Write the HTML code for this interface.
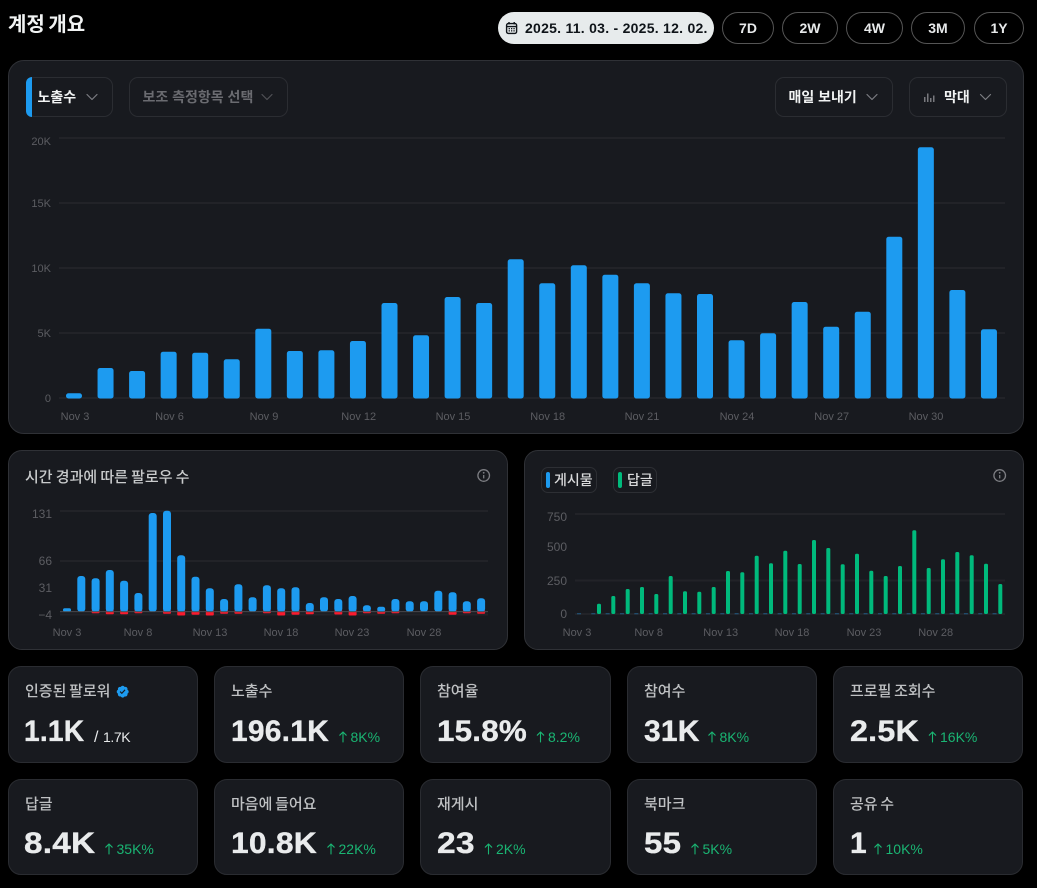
<!DOCTYPE html>
<html lang="ko">
<head>
<meta charset="utf-8">
<title>계정 개요</title>
<style>
*{box-sizing:border-box;margin:0;padding:0}
html,body{width:1037px;height:888px;background:#000;overflow:hidden}
body{position:relative;font-family:"Liberation Sans","Noto Sans CJK KR",sans-serif;color:#e7e9ea}
.a{position:absolute;white-space:nowrap}
.card{position:absolute;background:#181a1f;border:1px solid #2f3136}
.title{left:8px;top:11px;font-size:20px;line-height:28px;font-weight:700;color:#f1f3f3;word-spacing:-2px}
.pill{position:absolute;top:12px;height:32px;border:1px solid #555;border-radius:16px;font-size:14px;font-weight:700;line-height:30px;text-align:center;color:#e7e9ea}
.date{left:498px;width:216px;background:#e7ebec;border:0;color:#0f1419;line-height:32px;text-align:left;padding-left:27px;letter-spacing:.26px}
.dd{position:absolute;top:77px;height:40px;border:1px solid #2b2d32;border-radius:9px;background:#181a1f}
.ddt{top:87px;font-size:14px;line-height:20px;font-weight:700;color:#f1f3f3}
.ct{left:25px;top:467px;font-size:15px;line-height:22px;font-weight:500;color:#c9cbcc;word-spacing:-1px}
.chip{position:absolute;top:467px;height:26px;border:1px solid #2d2f34;border-radius:7px}
.cht{top:470px;font-size:14px;line-height:20px;font-weight:500;color:#d9dadb}
.m{position:absolute;width:190px;background:#181a1f;border:1px solid #2a2c31;border-radius:13px}
.l{font-size:15px;line-height:22px;font-weight:500;color:#bfc1c3;word-spacing:-1.5px}
.v{font-size:30px;line-height:34px;font-weight:700;color:#e9ebec;letter-spacing:.2px;transform-origin:0 50%;-webkit-text-stroke:.35px #e9ebec}
.d{font-size:14px;line-height:16px;color:#1ab573}
svg{position:absolute;left:0;top:0}
svg text{font-family:"Liberation Sans",sans-serif;font-size:11px;fill:#5c5d62}
svg text.y{font-size:12px}
</style>
</head>
<body>
<div class="a title">계정 개요</div>

<div class="pill date">2025. 11. 03. - 2025. 12. 02.</div>
<div class="pill" style="left:722px;width:52px">7D</div>
<div class="pill" style="left:782px;width:56px">2W</div>
<div class="pill" style="left:846px;width:57px">4W</div>
<div class="pill" style="left:911px;width:54px">3M</div>
<div class="pill" style="left:974px;width:50px">1Y</div>

<div class="card" style="left:8px;top:60px;width:1016px;height:374px;border-radius:16px"></div>
<div class="card" style="left:8px;top:450px;width:500px;height:200px;border-radius:14px"></div>
<div class="card" style="left:524px;top:450px;width:500px;height:200px;border-radius:14px"></div>

<div class="dd" style="left:26px;width:87px"></div>
<div style="position:absolute;left:26px;top:77px;width:6px;height:40px;background:#1d9bf0;border-radius:6px 0 0 6px"></div>
<div class="a ddt" style="left:37.5px">노출수</div>
<div class="dd" style="left:129px;width:159px"></div>
<div class="a ddt" style="left:142.5px;color:#6a6b70">보조 측정항목 선택</div>
<div class="dd" style="left:775px;width:118px"></div>
<div class="a ddt" style="left:788.5px">매일 보내기</div>
<div class="dd" style="left:909px;width:98px"></div>
<div class="a ddt" style="left:944px">막대</div>

<div class="a ct">시간 경과에 따른 팔로우 수</div>

<div class="chip" style="left:541px;width:56px"></div>
<div style="position:absolute;left:546px;top:472px;width:4px;height:16px;border-radius:2px;background:#1d9bf0"></div>
<div class="a cht" style="left:554px">게시물</div>
<div class="chip" style="left:613px;width:44px"></div>
<div style="position:absolute;left:618px;top:472px;width:4px;height:16px;border-radius:2px;background:#00ba7c"></div>
<div class="a cht" style="left:627px">답글</div>

<div class="m" style="left:8px;top:666px;height:97px"></div>
<div class="m" style="left:214px;top:666px;height:97px"></div>
<div class="m" style="left:420px;top:666px;height:97px;width:191px"></div>
<div class="m" style="left:627px;top:666px;height:97px"></div>
<div class="m" style="left:833px;top:666px;height:97px"></div>
<div class="m" style="left:8px;top:779px;height:96px"></div>
<div class="m" style="left:214px;top:779px;height:96px"></div>
<div class="m" style="left:420px;top:779px;height:96px;width:191px"></div>
<div class="m" style="left:627px;top:779px;height:96px"></div>
<div class="m" style="left:833px;top:779px;height:96px"></div>

<div class="a l" style="left:25px;top:681px">인증된 팔로워</div>
<div class="a l" style="left:231px;top:681px">노출수</div>
<div class="a l" style="left:437px;top:681px">참여율</div>
<div class="a l" style="left:644px;top:681px">참여수</div>
<div class="a l" style="left:850px;top:681px">프로필 조회수</div>
<div class="a l" style="left:25px;top:794px">답글</div>
<div class="a l" style="left:231px;top:794px">마음에 들어요</div>
<div class="a l" style="left:437px;top:794px">재게시</div>
<div class="a l" style="left:644px;top:794px">북마크</div>
<div class="a l" style="left:850px;top:794px">공유 수</div>

<div class="a v" style="left:24px;top:715px;transform:scaleX(.94)">1.1K</div>
<div class="a v" style="left:231px;top:715px">196.1K</div>
<div class="a v" style="left:437px;top:715px;transform:scaleX(1.045)">15.8%</div>
<div class="a v" style="left:644px;top:715px">31K</div>
<div class="a v" style="left:850px;top:715px;transform:scaleX(1.075)">2.5K</div>
<div class="a v" style="left:24px;top:827px;transform:scaleX(1.11)">8.4K</div>
<div class="a v" style="left:231px;top:827px;transform:scaleX(1.06)">10.8K</div>
<div class="a v" style="left:437px;top:827px;transform:scaleX(1.12)">23</div>
<div class="a v" style="left:644px;top:827px;transform:scaleX(1.1)">55</div>
<div class="a v" style="left:850px;top:827px">1</div>

<div class="a" style="left:94px;top:729px;font-size:16px;line-height:18px;color:#e7e9ea">/</div>
<div class="a" style="left:103px;top:729px;font-size:14px;line-height:16px;letter-spacing:-.4px;color:#e7e9ea">1.7K</div>

<div class="a d" style="left:350.5px;top:729px">8K%</div>
<div class="a d" style="left:548px;top:729px">8.2%</div>
<div class="a d" style="left:719.5px;top:729px">8K%</div>
<div class="a d" style="left:940px;top:729px">16K%</div>
<div class="a d" style="left:116.5px;top:841px">35K%</div>
<div class="a d" style="left:338.5px;top:841px">22K%</div>
<div class="a d" style="left:496px;top:841px">2K%</div>
<div class="a d" style="left:702.5px;top:841px">5K%</div>
<div class="a d" style="left:885.5px;top:841px">10K%</div>

<svg width="1037" height="888" viewBox="0 0 1037 888" xmlns="http://www.w3.org/2000/svg">
<!-- calendar -->
<g fill="none" stroke="#0f1419" stroke-width="1.4"><rect x="506.6" y="23.6" width="10" height="9.8" rx="1.6"/><path d="M506.6 26.6h10M509 22v2.4M514.2 22v2.4"/></g>
<g fill="#0f1419"><rect x="508.6" y="28" width="1.3" height="1.3"/><rect x="511" y="28" width="1.3" height="1.3"/><rect x="513.4" y="28" width="1.3" height="1.3"/><rect x="508.6" y="30.2" width="1.3" height="1.3"/><rect x="511" y="30.2" width="1.3" height="1.3"/><rect x="513.4" y="30.2" width="1.3" height="1.3"/></g>

<!-- chevrons -->
<g fill="none" stroke-width="1.2" stroke-linecap="round" stroke-linejoin="round">
<path d="M87 94.5l5 5 5-5" stroke="#7c7d82"/>
<path d="M262 94.5l5 5 5-5" stroke="#505156"/>
<path d="M867 94.5l5 5 5-5" stroke="#7c7d82"/>
<path d="M980.5 94.5l5 5 5-5" stroke="#7c7d82"/>
</g>
<!-- bar icon -->
<g fill="#77787d"><rect x="924" y="97" width="1.5" height="5"/><rect x="927" y="93.5" width="1.5" height="8.5"/><rect x="930" y="98" width="1.5" height="4"/><rect x="933" y="95.5" width="1.5" height="6.5"/></g>

<!-- main grid -->
<g fill="#222328"><rect x="59" y="137" width="946" height="2"/><rect x="59" y="202" width="946" height="2"/><rect x="59" y="267" width="946" height="2"/><rect x="59" y="332" width="946" height="2"/><rect x="59" y="397" width="946" height="2"/></g>
<g text-anchor="end"><text x="51" y="145">20K</text><text x="51" y="207">15K</text><text x="51" y="272">10K</text><text x="51" y="337">5K</text><text x="51" y="402">0</text></g>
<g text-anchor="middle"><text x="75" y="420">Nov 3</text><text x="169.5" y="420">Nov 6</text><text x="264" y="420">Nov 9</text><text x="358.7" y="420">Nov 12</text><text x="453" y="420">Nov 15</text><text x="547.7" y="420">Nov 18</text><text x="642" y="420">Nov 21</text><text x="737" y="420">Nov 24</text><text x="831.7" y="420">Nov 27</text><text x="926" y="420">Nov 30</text></g>
<g fill="#1d9bf0">
<rect x="66" y="393.3" width="16" height="5.2" rx="2.5"/>
<rect x="97.55" y="368" width="16" height="30.5" rx="2.5"/>
<rect x="129.1" y="371" width="16" height="27.5" rx="2.5"/>
<rect x="160.65" y="351.7" width="16" height="46.8" rx="2.5"/>
<rect x="192.2" y="352.7" width="16" height="45.8" rx="2.5"/>
<rect x="223.75" y="359.3" width="16" height="39.2" rx="2.5"/>
<rect x="255.3" y="328.7" width="16" height="69.8" rx="2.5"/>
<rect x="286.85" y="351" width="16" height="47.5" rx="2.5"/>
<rect x="318.4" y="350.3" width="16" height="48.2" rx="2.5"/>
<rect x="349.95" y="341" width="16" height="57.5" rx="2.5"/>
<rect x="381.5" y="303" width="16" height="95.5" rx="2.5"/>
<rect x="413.05" y="335.3" width="16" height="63.2" rx="2.5"/>
<rect x="444.6" y="297" width="16" height="101.5" rx="2.5"/>
<rect x="476.15" y="303" width="16" height="95.5" rx="2.5"/>
<rect x="507.7" y="259.3" width="16" height="139.2" rx="2.5"/>
<rect x="539.25" y="283.3" width="16" height="115.2" rx="2.5"/>
<rect x="570.8" y="265.3" width="16" height="133.2" rx="2.5"/>
<rect x="602.35" y="274.7" width="16" height="123.8" rx="2.5"/>
<rect x="633.9" y="283.3" width="16" height="115.2" rx="2.5"/>
<rect x="665.45" y="293.3" width="16" height="105.2" rx="2.5"/>
<rect x="697" y="294" width="16" height="104.5" rx="2.5"/>
<rect x="728.55" y="340.3" width="16" height="58.2" rx="2.5"/>
<rect x="760.1" y="333.3" width="16" height="65.2" rx="2.5"/>
<rect x="791.65" y="302" width="16" height="96.5" rx="2.5"/>
<rect x="823.2" y="326.7" width="16" height="71.8" rx="2.5"/>
<rect x="854.75" y="311.7" width="16" height="86.8" rx="2.5"/>
<rect x="886.3" y="236.7" width="16" height="161.8" rx="2.5"/>
<rect x="917.85" y="147.3" width="16" height="251.2" rx="2.5"/>
<rect x="949.4" y="290" width="16" height="108.5" rx="2.5"/>
<rect x="980.95" y="329.3" width="16" height="69.2" rx="2.5"/>
</g>

<!-- info icons -->
<g fill="none" stroke="#7c7d82" stroke-width="1.3"><circle cx="483.7" cy="475.5" r="5.8"/><path d="M483.7 475v3.4"/><circle cx="999.7" cy="475.5" r="5.8"/><path d="M999.7 475v3.4"/></g>
<g fill="#7c7d82"><circle cx="483.7" cy="472.8" r=".9"/><circle cx="999.7" cy="472.8" r=".9"/></g>

<!-- follower chart -->
<g fill="#222328"><rect x="60" y="510" width="428" height="2"/><rect x="60" y="560" width="428" height="2"/><rect x="60" y="613.5" width="428" height="2"/></g>
<g text-anchor="end"><text class="y" x="52" y="518">131</text><text class="y" x="52" y="565">66</text><text class="y" x="52" y="592">31</text><text class="y" x="52" y="619">−4</text></g>
<g text-anchor="middle"><text x="67" y="636">Nov 3</text><text x="138" y="636">Nov 8</text><text x="210" y="636">Nov 13</text><text x="281" y="636">Nov 18</text><text x="352" y="636">Nov 23</text><text x="424" y="636">Nov 28</text></g>
<g fill="#fb1a2e">
<rect x="91.6" y="610" width="8" height="3.2" rx="1"/>
<rect x="105.8" y="610" width="8" height="4.2" rx="1"/>
<rect x="120.1" y="610" width="8" height="4.2" rx="1"/>
<rect x="134.4" y="610" width="8" height="3.2" rx="1"/>
<rect x="163" y="610" width="8" height="3.8" rx="1"/>
<rect x="177.2" y="610" width="8" height="5.5" rx="1"/>
<rect x="191.5" y="610" width="8" height="4.8" rx="1"/>
<rect x="205.8" y="610" width="8" height="5.5" rx="1"/>
<rect x="220.1" y="610" width="8" height="3.8" rx="1"/>
<rect x="234.4" y="610" width="8" height="3.8" rx="1"/>
<rect x="262.9" y="610" width="8" height="3.2" rx="1"/>
<rect x="277.2" y="610" width="8" height="5.5" rx="1"/>
<rect x="291.5" y="610" width="8" height="4.8" rx="1"/>
<rect x="305.8" y="610" width="8" height="4.2" rx="1"/>
<rect x="334.3" y="610" width="8" height="4.5" rx="1"/>
<rect x="348.6" y="610" width="8" height="5.5" rx="1"/>
<rect x="362.9" y="610" width="8" height="3.2" rx="1"/>
<rect x="377.2" y="610" width="8" height="3.8" rx="1"/>
<rect x="391.4" y="610" width="8" height="3.2" rx="1"/>
<rect x="448.6" y="610" width="8" height="4.8" rx="1"/>
<rect x="462.8" y="610" width="8" height="3.2" rx="1"/>
<rect x="477.1" y="610" width="8" height="3.8" rx="1"/>
</g>
<g fill="#1d9bf0">
<rect x="63" y="608.3" width="8" height="3.4" rx="1.7"/>
<rect x="77.3" y="576" width="8" height="35.7" rx="3"/>
<rect x="91.6" y="578.3" width="8" height="33.4" rx="3"/>
<rect x="105.8" y="570" width="8" height="41.7" rx="3"/>
<rect x="120.1" y="580.7" width="8" height="31" rx="3"/>
<rect x="134.4" y="593" width="8" height="18.7" rx="3"/>
<rect x="148.7" y="513" width="8" height="98.7" rx="3"/>
<rect x="163" y="510.7" width="8" height="101" rx="3"/>
<rect x="177.2" y="555.3" width="8" height="56.4" rx="3"/>
<rect x="191.5" y="576.7" width="8" height="35" rx="3"/>
<rect x="205.8" y="588.3" width="8" height="23.4" rx="3"/>
<rect x="220.1" y="599" width="8" height="12.7" rx="3"/>
<rect x="234.4" y="584.3" width="8" height="27.4" rx="3"/>
<rect x="248.6" y="597.3" width="8" height="14.4" rx="3"/>
<rect x="262.9" y="585.3" width="8" height="26.4" rx="3"/>
<rect x="277.2" y="588.3" width="8" height="23.4" rx="3"/>
<rect x="291.5" y="587.3" width="8" height="24.4" rx="3"/>
<rect x="305.8" y="603" width="8" height="8.7" rx="3"/>
<rect x="320" y="597.3" width="8" height="14.4" rx="3"/>
<rect x="334.3" y="599" width="8" height="12.7" rx="3"/>
<rect x="348.6" y="596" width="8" height="15.7" rx="3"/>
<rect x="362.9" y="605.3" width="8" height="6.4" rx="3"/>
<rect x="377.2" y="606.7" width="8" height="5" rx="2.5"/>
<rect x="391.4" y="599" width="8" height="12.7" rx="3"/>
<rect x="405.7" y="601.3" width="8" height="10.4" rx="3"/>
<rect x="420" y="601.3" width="8" height="10.4" rx="3"/>
<rect x="434.3" y="590.7" width="8" height="21" rx="3"/>
<rect x="448.6" y="592.3" width="8" height="19.4" rx="3"/>
<rect x="462.8" y="601.3" width="8" height="10.4" rx="3"/>
<rect x="477.1" y="598.3" width="8" height="13.4" rx="3"/>
</g>
<rect x="60" y="611.2" width="428" height="1" fill="#4c4d52"/>

<!-- posts/replies chart -->
<g fill="#222328"><rect x="575" y="513" width="430" height="2"/><rect x="575" y="579.5" width="430" height="2"/><rect x="575" y="613" width="430" height="2"/></g>
<g text-anchor="end"><text class="y" x="567" y="521">750</text><text class="y" x="567" y="551">500</text><text class="y" x="567" y="585">250</text><text class="y" x="567" y="618">0</text></g>
<g text-anchor="middle"><text x="577" y="636">Nov 3</text><text x="648.7" y="636">Nov 8</text><text x="720.7" y="636">Nov 13</text><text x="792" y="636">Nov 18</text><text x="864" y="636">Nov 23</text><text x="935.7" y="636">Nov 28</text></g>
<path d="M577 613.7H1003" stroke="#1d9bf0" stroke-opacity=".45" stroke-width="1" stroke-dasharray="4 10.33" fill="none"/>
<g fill="#00ba7c">
<rect x="597" y="603.7" width="4" height="10.3" rx="1.5"/>
<rect x="611.3" y="596" width="4" height="18" rx="1.5"/>
<rect x="625.7" y="589" width="4" height="25" rx="1.5"/>
<rect x="640" y="587" width="4" height="27" rx="1.5"/>
<rect x="654.3" y="594" width="4" height="20" rx="1.5"/>
<rect x="668.7" y="576" width="4" height="38" rx="1.5"/>
<rect x="683" y="591.3" width="4" height="22.7" rx="1.5"/>
<rect x="697.3" y="591.7" width="4" height="22.3" rx="1.5"/>
<rect x="711.7" y="587" width="4" height="27" rx="1.5"/>
<rect x="726" y="571" width="4" height="43" rx="1.5"/>
<rect x="740.3" y="572.3" width="4" height="41.7" rx="1.5"/>
<rect x="754.7" y="555.7" width="4" height="58.3" rx="1.5"/>
<rect x="769" y="563.3" width="4" height="50.7" rx="1.5"/>
<rect x="783.3" y="550.7" width="4" height="63.3" rx="1.5"/>
<rect x="797.7" y="564" width="4" height="50" rx="1.5"/>
<rect x="812" y="540" width="4" height="74" rx="1.5"/>
<rect x="826.3" y="548" width="4" height="66" rx="1.5"/>
<rect x="840.7" y="564.3" width="4" height="49.7" rx="1.5"/>
<rect x="855" y="553.7" width="4" height="60.3" rx="1.5"/>
<rect x="869.3" y="570.7" width="4" height="43.3" rx="1.5"/>
<rect x="883.7" y="576" width="4" height="38" rx="1.5"/>
<rect x="898" y="566" width="4" height="48" rx="1.5"/>
<rect x="912.3" y="530.3" width="4" height="83.7" rx="1.5"/>
<rect x="926.7" y="568" width="4" height="46" rx="1.5"/>
<rect x="941" y="559.3" width="4" height="54.7" rx="1.5"/>
<rect x="955.3" y="552" width="4" height="62" rx="1.5"/>
<rect x="969.7" y="555.3" width="4" height="58.7" rx="1.5"/>
<rect x="984" y="563.7" width="4" height="50.3" rx="1.5"/>
<rect x="998.3" y="584" width="4" height="30" rx="1.5"/>
</g>

<!-- verified badge -->
<svg x="115.7" y="684.7" width="14" height="14" viewBox="0 0 24 24"><path fill="#1d9bf0" d="M22.25 12c0-1.43-.88-2.67-2.19-3.34.46-1.39.2-2.9-.81-3.91s-2.52-1.27-3.91-.81c-.66-1.31-1.91-2.19-3.34-2.19s-2.67.88-3.33 2.19c-1.4-.46-2.91-.2-3.92.81s-1.26 2.52-.8 3.91c-1.31.67-2.2 1.91-2.2 3.34s.89 2.67 2.2 3.34c-.46 1.39-.21 2.9.8 3.91s2.52 1.26 3.91.81c.67 1.31 1.91 2.19 3.34 2.19s2.68-.88 3.34-2.19c1.39.45 2.9.2 3.91-.81s1.27-2.52.81-3.91c1.31-.67 2.19-1.91 2.19-3.34zm-11.71 4.2L6.8 12.46l1.41-1.42 2.26 2.26 4.8-5.23 1.47 1.36-6.2 6.77z"/></svg>

<!-- delta arrows -->
<g fill="none" stroke="#1ab573" stroke-width="1.1" stroke-linecap="round" stroke-linejoin="round">
<path d="M343 742v-9.6M339.8 735.2l3.2-3.2 3.2 3.2"/>
<path d="M540.5 742v-9.6M537.3 735.2l3.2-3.2 3.2 3.2"/>
<path d="M712 742v-9.6M708.8 735.2l3.2-3.2 3.2 3.2"/>
<path d="M932.5 742v-9.6M929.3 735.2l3.2-3.2 3.2 3.2"/>
<path d="M109 854v-9.6M105.8 847.2l3.2-3.2 3.2 3.2"/>
<path d="M331 854v-9.6M327.8 847.2l3.2-3.2 3.2 3.2"/>
<path d="M488.5 854v-9.6M485.3 847.2l3.2-3.2 3.2 3.2"/>
<path d="M695 854v-9.6M691.8 847.2l3.2-3.2 3.2 3.2"/>
<path d="M878 854v-9.6M874.8 847.2l3.2-3.2 3.2 3.2"/>
</g>
</svg>
</body>
</html>
